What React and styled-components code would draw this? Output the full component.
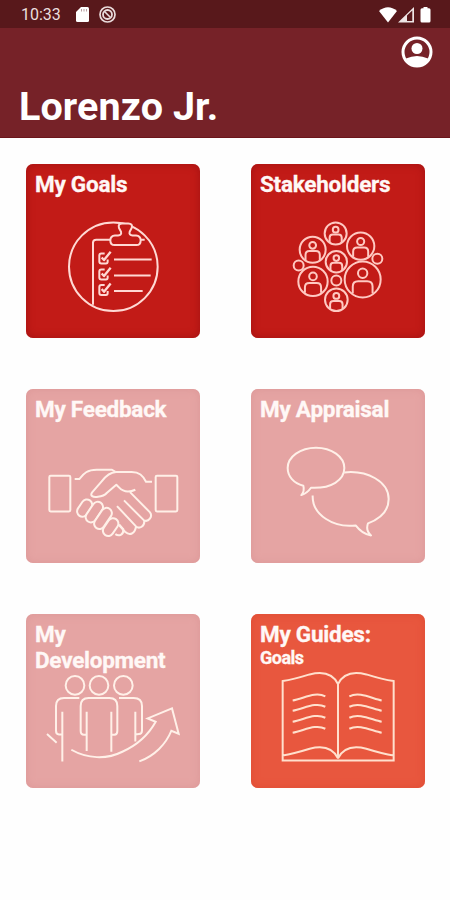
import React from "react";
import styled, { createGlobalStyle } from "styled-components";

// css
const GlobalStyle = createGlobalStyle`
  body {
    margin: 0;
    background-color: #ffffff;
    font-family: Roboto, "Liberation Sans", sans-serif;
  }
`;
const Screen = styled.div`
  width: 450px;
  height: 900px;
  background-color: #fefefe;
  overflow: hidden;
`;
const StatusBar = styled.div`
  display: flex;
  align-items: center;
  justify-content: space-between;
  box-sizing: border-box;
  height: 28px;
  padding: 1px 19px 0 21px;
  background-color: #58181b;
`;
const StatusGroup = styled.div`
  display: flex;
  align-items: center;
  gap: ${(props) => props.$gap};
`;
const Clock = styled.span`
  width: 41px;
  margin-right: 4px;
  color: #eadfdf;
  font-size: 16px;
  white-space: nowrap;
`;
const Header = styled.header`
  display: flex;
  flex-direction: column;
  justify-content: space-between;
  box-sizing: border-box;
  height: 109.5px;
  padding: 8px 17px 7px 19px;
  background-color: #762228;
  border-bottom: 1px solid #6b151b;
`;
const ProfileButton = styled.button`
  align-self: flex-end;
  width: 32px;
  height: 32px;
  padding: 0;
  border: none;
  background: none;
`;
const UserName = styled.h1`
  margin: 0;
  color: #ffffff;
  font-size: 39.5px;
  font-weight: 700;
  line-height: 46px;
  letter-spacing: 0.1px;
`;
const MenuGrid = styled.main`
  display: grid;
  grid-template-columns: 174px 174px;
  grid-auto-rows: 173.5px;
  gap: 51.5px 51px;
  padding: 26.5px 26px;
`;
const Tile = styled.button`
  display: grid;
  padding: 0;
  border: none;
  border-radius: 7px;
  background-color: ${(props) => props.$bg};
  box-shadow: inset 0 0 9px ${(props) => props.$edge};
  color: #fff8f6;
  font-family: inherit;
  text-align: left;
`;
const TileText = styled.span`
  grid-area: 1 / 1;
  padding: 7px 9px 0;
`;
const TileTitle = styled.span`
  display: block;
  font-size: 22.5px;
  font-weight: 700;
  line-height: 26px;
  letter-spacing: -0.25px;
  -webkit-text-stroke: 0.3px currentColor;
`;
const TileSub = styled.span`
  display: block;
  font-size: 18px;
  font-weight: 700;
  line-height: 22px;
  letter-spacing: -0.5px;
  -webkit-text-stroke: 0.3px currentColor;
`;
const Drawing = styled.svg`
  grid-area: 1 / 1;
  display: block;
  width: 174px;
  height: 173.5px;
  fill: none;
  stroke: ${(props) => props.$line};
  stroke-width: 6;
  stroke-linejoin: round;
`;

// one person in a bubble, r is the bubble radius
const Person = ({ x, y, r }) => (
  <g>
    <circle cx={x} cy={y} r={r} />
    <circle cx={x} cy={y - r * 0.34} r={r * 0.26} />
    <path
      d={`M${x - r * 0.55} ${y + r * 0.78} v${-r * 0.38} q0 ${-r * 0.3} ${r * 0.3} ${-r * 0.3} h${r * 0.5} q${r * 0.3} 0 ${r * 0.3} ${r * 0.3} v${r * 0.38}`}
    />
  </g>
);

const GoalsArt = ({ bg }) => (
  <>
    <circle cx="295" cy="335" r="133" />
    <path d="M234 449 V263 Q234 254 244 254 H286 M378 254 H389" />
    <path
      fill={bg}
      d="M299 270 Q286 270 286 256 Q286 242 300 241 H309 Q321 240 318 230 L312 219 Q308 205 322 205 H340 Q354 205 350 219 L344 230 Q341 240 353 241 H363 Q377 242 377 256 Q377 270 364 270 Z"
    />
    {[309, 357, 404].map((y) => (
      <g key={y}>
        <path d={`M269 ${y - 14} H259 Q253 ${y - 14} 253 ${y - 8} V${y + 10} Q253 ${y + 16} 259 ${y + 16} H273 Q278 ${y + 16} 278 ${y + 10} V${y + 4}`} />
        <path strokeWidth="7" d={`M260 ${y - 2} L267 ${y + 6} L287 ${y - 19}`} />
      </g>
    ))}
    <path d="M297 313 H410 M297 361 H407 M297 408 H383" />
  </>
);

const StakeholdersArt = () => (
  <>
    <Person x={287} y={235} r={33} />
    <Person x={218} y={284} r={39} />
    <Person x={362} y={273} r={41} />
    <Person x={289} y={320} r={32} />
    <Person x={219} y={379} r={44} />
    <Person x={368} y={373} r={54} />
    <Person x={289} y={434} r={34} />
    <circle cx="176" cy="331" r="15" />
    <circle cx="412" cy="311" r="15" />
    <circle cx="289" cy="376" r="15" />
  </>
);

// x, y, length, drawn from the back one to the front
const fingers = [
  [209, 384, 56],
  [238, 396, 68],
  [264, 415, 70],
  [287, 441, 58],
];

const FeedbackArt = ({ bg }) => (
  <>
    <rect x="103" y="287" width="63" height="107" rx="4" />
    <rect x="422" y="287" width="65" height="107" rx="4" />
    <path d="M179 297 H193 C203 286 211 269 245 269 H291 L301 275" />
    <path d="M411 305 H393 C383 286 373 276 350 276 H303 C282 277 270 291 260 304 L232 336 C223 347 234 353 249 350 C261 349 269 346 276 338 L304 314 L312 322 C323 334 339 339 361 329" />
    <path d="M345 336 L405 397 C414 409 401 427 387 421 L327 361" />
    <path d="M388 422 C389 438 374 448 363 439 L306 378 M363 440 C359 461 345 468 330 455 L304 426" />
    <path d="M325 449 C326 464 312 470 301 462 M313 434 L326 449" />
    {fingers.map(([x, y, len]) => (
      <rect
        key={x}
        x={x - 16}
        y={y - len / 2}
        width="32"
        height={len}
        rx="16"
        fill={bg}
        transform={`rotate(34 ${x} ${y})`}
      />
    ))}
  </>
);

const AppraisalArt = () => (
  <>
    <path d="M190 317 C161 310 143 289 143 264 C143 230 181 203 228 203 C275 203 313 230 313 264 C313 300 274 326 213 323 C206 333 197 341 184 345 C191 337 193 328 190 317 Z" />
    <path d="M313 277 C382 270 446 304 446 357 C446 389 423 415 384 430 C379 443 382 456 393 466 C373 463 359 452 347 436 C281 444 216 405 218 346" />
  </>
);

const DevelopmentArt = () => (
  <>
    <circle cx="180" cy="241" r="28" />
    <circle cx="252" cy="241" r="28" />
    <circle cx="325" cy="241" r="28" />
    <path d="M193 279 H147 Q123 279 123 303 V377 Q123 388 132 388 H142 M142 320 V469" />
    <path d="M215 320 V438 M215 389 H207 Q197 389 197 378 V303 Q197 279 221 279 H283 Q307 279 307 303 V378 Q307 389 298 389 H289 M289 320 V440" />
    <path d="M312 279 H356 Q381 279 381 303 V376 Q381 386 372 387 L361 388 M361 320 V409" />
    <path d="M96 387 L125 413 M169 434 C217 461 274 464 322 440 C373 417 401 388 422 350 L398 340 L471 310 L491 386 L469 377 C453 417 419 452 373 469" strokeLinejoin="miter" />
  </>
);

const GuidesArt = () => (
  <>
    <path
      strokeLinejoin="miter"
      d="M294 237 C279 206 248 198 209 208 C180 217 156 224 128 228 V466 H461 V228 C433 224 408 217 379 208 C340 198 309 206 294 237 V460 C279 429 248 421 209 431 C180 440 156 447 128 451 M294 460 C309 429 340 421 379 431 C408 440 433 447 461 451"
    />
    {[286, 317, 350, 383].map((y) => (
      <path key={y} d={`M158 ${y} C190 ${y - 5} 226 ${y - 28} 256 ${y - 12} M425 ${y} C397 ${y - 5} 358 ${y - 28} 328 ${y - 12}`} />
    ))}
  </>
);

const tiles = [
  { title: "My Goals", bg: "#c21b17", edge: "#a31212", line: "#ffd9d4", Art: GoalsArt },
  { title: "Stakeholders", bg: "#c21b17", edge: "#a31212", line: "#ffc9c2", Art: StakeholdersArt },
  { title: "My Feedback", bg: "#e5a4a3", edge: "#dc9898", line: "#fff0e8", Art: FeedbackArt },
  { title: "My Appraisal", bg: "#e5a4a3", edge: "#dc9898", line: "#fff0e8", Art: AppraisalArt },
  { title: "My Development", bg: "#e5a4a3", edge: "#dc9898", line: "#fff0e8", Art: DevelopmentArt },
  { title: "My Guides:", sub: "Goals", bg: "#e8573e", edge: "#df4c34", line: "#ffe0cd", Art: GuidesArt },
];

const App = () => {
  return (
    <Screen>
      <GlobalStyle />
      <StatusBar>
        <StatusGroup $gap="10px">
          <Clock>10:33</Clock>
          <svg width="13" height="15" viewBox="0 0 13 15">
            <path fill="#fff" d="M5 0h6.5Q13 0 13 1.5v12q0 1.500-1.500 1.500h-10Q0 15 0 13.500V5z" />
            <path stroke="#b79da0" d="M5.500 2v2.500M8 2v2.500M10.500 2v2.500" />
          </svg>
          <svg width="17" height="17" viewBox="0 0 17 17" fill="none" stroke="#eadcdc">
            <circle cx="8.500" cy="8.500" r="7.500" strokeWidth="1.700" />
            <circle cx="8.500" cy="8.500" r="4.500" strokeWidth="1.800" />
            <path strokeWidth="1.600" d="M5.500 5.500l6 6" />
          </svg>
        </StatusGroup>
        <StatusGroup $gap="1px">
          <svg width="18" height="16" viewBox="0 0 18 16">
            <path fill="#fff" d="M0 4Q9-3.500 18 4L9 15.500z" />
          </svg>
          <svg width="16" height="16" viewBox="0 0 16 16">
            <path fill="#eee5e5" fillRule="evenodd" d="M0 15.500L16 0v15.500zM9 8.500v5.500h5.300V3.500z" />
          </svg>
          <svg width="16" height="16" viewBox="0 0 16 16">
            <path fill="#fff" d="M8.500 0h4v1.300h1.500q1.500 0 1.500 1.500V14q0 1.500-1.500 1.500H7Q5.500 15.500 5.500 14V2.800q0-1.500 1.500-1.500h1.500z" />
          </svg>
        </StatusGroup>
      </StatusBar>
      <Header>
        <ProfileButton>
          <svg width="32" height="32" viewBox="0 0 32 32">
            <circle cx="16" cy="16" r="14" fill="none" stroke="#fff" strokeWidth="3" />
            <circle cx="16" cy="12.500" r="5.500" fill="#fff" />
            <path fill="#fff" d="M5 22.500Q16 17.500 27 22.500L24 28Q16 32 8 28z" />
          </svg>
        </ProfileButton>
        <UserName>Lorenzo Jr.</UserName>
      </Header>
      {/* menu */}
      <MenuGrid>
        {tiles.map(({ title, sub, bg, edge, line, Art }) => (
          <Tile key={title} $bg={bg} $edge={edge}>
            <TileText>
              <TileTitle>{title}</TileTitle>
              {sub && <TileSub>{sub}</TileSub>}
            </TileText>
            <Drawing viewBox="33 27 522 520" $line={line}>
              <Art bg={bg} />
            </Drawing>
          </Tile>
        ))}
      </MenuGrid>
    </Screen>
  );
};

export default App;
